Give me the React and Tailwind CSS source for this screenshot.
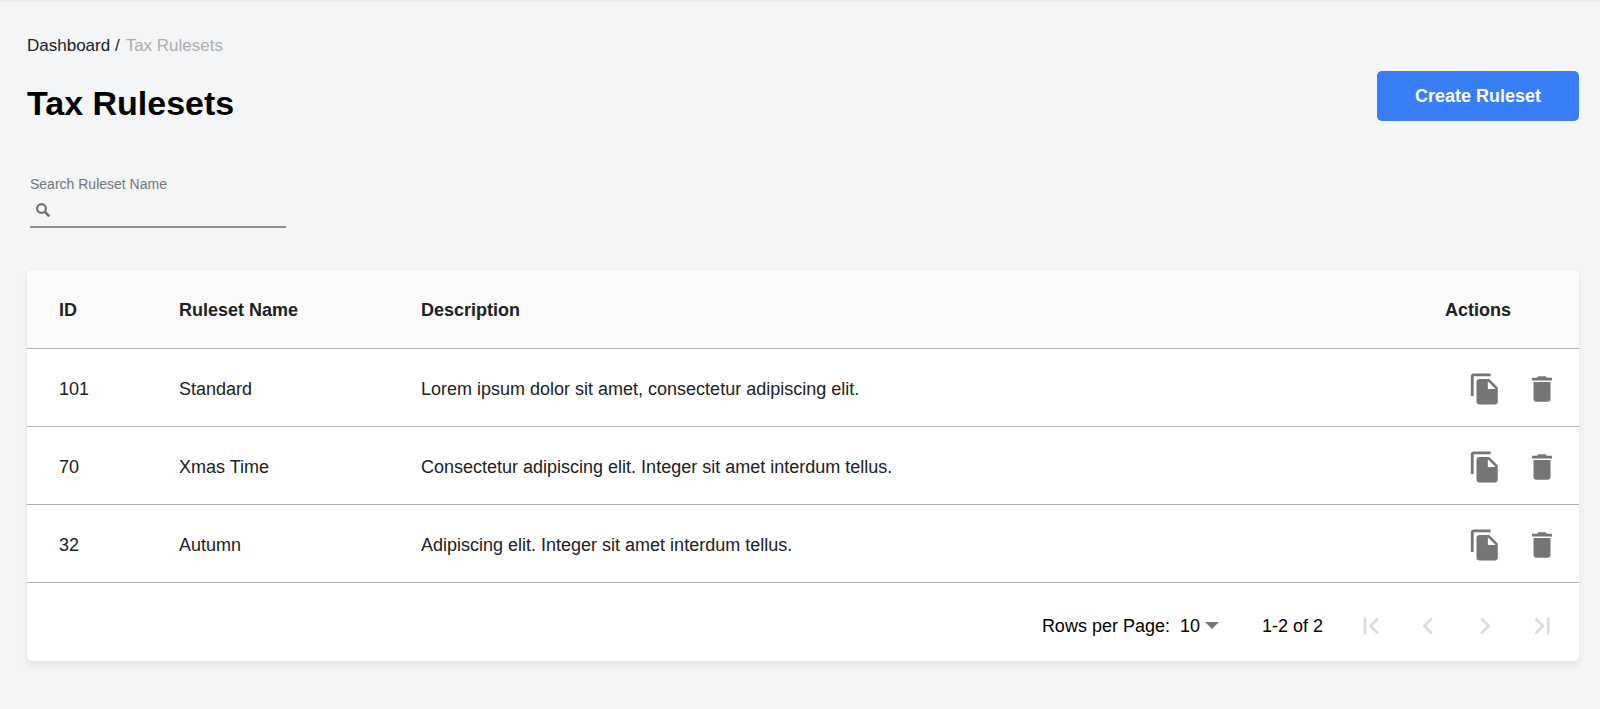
const rulesets = [
  { id: 101, name: "Standard", description: "Lorem ipsum dolor sit amet, consectetur adipiscing elit." },
  { id: 70, name: "Xmas Time", description: "Consectetur adipiscing elit. Integer sit amet interdum tellus." },
  { id: 32, name: "Autumn", description: "Adipiscing elit. Integer sit amet interdum tellus." },
];

function CopyIcon() {
  return (
    <svg className="size-[34px]" viewBox="0 0 24 24" fill="currentColor" aria-hidden="true">
      <path d="M16 1H4c-1.1 0-2 .9-2 2v14h2V3h12V1zm-1 4l6 6v10c0 1.1-.9 2-2 2H7.99C6.89 23 6 22.1 6 21V7c0-1.1.89-2 1.99-2H15zm-1 7h5.5L14 6.5V12z" />
    </svg>
  );
}

function DeleteIcon() {
  return (
    <svg className="size-[34px]" viewBox="0 0 24 24" fill="currentColor" aria-hidden="true">
      <path d="M6 19c0 1.1.9 2 2 2h8c1.1 0 2-.9 2-2V7H6v12zM19 4h-3.5l-1-1h-5l-1 1H5v2h14V4z" />
    </svg>
  );
}

function SearchIcon() {
  return (
    <svg className="size-[14px]" viewBox="0 0 14 14" fill="none" stroke="currentColor" aria-hidden="true">
      <circle cx="5.5" cy="5.5" r="4.4" strokeWidth="2.1" />
      <path d="M8.6 8.6l4.8 4.8" strokeWidth="2.6" />
    </svg>
  );
}

const pagerPaths = {
  "First page": "M17.6 16.59L13.01 12l4.59-4.59L16.19 6l-6 6 6 6zM6.8 6h2v12h-2z",
  "Previous page": "M15.41 7.41L14 6l-6 6 6 6 1.41-1.41L10.83 12z",
  "Next page": "M8.59 16.59L13.17 12 8.59 7.41 10 6l6 6-6 6z",
  "Last page": "M6.7 7.41L11.29 12l-4.59 4.59L8.11 18l6-6-6-6zM15.4 6h2v12h-2z",
};

function Pager() {
  return (
    <nav aria-label="Pagination" className="flex gap-[23px] text-[#dcdcdc]">
      {Object.entries(pagerPaths).map(([label, d]) => (
        <button key={label} type="button" aria-label={label} disabled>
          <svg className="size-[34px]" viewBox="0 0 24 24" fill="currentColor" aria-hidden="true">
            <path d={d} />
          </svg>
        </button>
      ))}
    </nav>
  );
}

export default function App() {
  return (
    <main className="min-h-screen border-t-2 border-[#ebecee] bg-[#f3f5f7] pt-[34px] pr-[21px] pb-12 pl-[27px] font-['Liberation_Sans',Arial,sans-serif] text-lg text-[#202124]">
      <header className="flex items-end justify-between">
        <div>
          <nav aria-label="Breadcrumb" className="flex gap-[6px] text-[17px] leading-5">
            <a href="#dashboard">Dashboard /</a>
            <span className="text-[#adadad]">Tax Rulesets</span>
          </nav>
          <h1 className="mt-[26px] text-[34px] leading-[42px] font-bold text-black">Tax Rulesets</h1>
        </div>
        <button type="button" className="mb-[3px] h-[50px] rounded-[5px] bg-[#377ef7] px-[38px] text-lg font-bold text-white">
          Create Ruleset
        </button>
      </header>

      <form className="mt-[50px] ml-[3px] w-64">
        <label htmlFor="search" className="block text-sm leading-5 text-[#757575]">Search Ruleset Name</label>
        <div className="flex h-[34px] items-center border-b-2 border-[#8e8f91] pl-[6px] text-[#6e6e6e]">
          <SearchIcon />
          <input id="search" type="text" className="min-w-0 flex-1 bg-transparent pl-2 text-base outline-none" />
        </div>
      </form>

      <section className="mt-[42px] overflow-hidden rounded-[5px] bg-white shadow-[0_6px_6px_rgba(0,0,0,0.06),0_0_4px_rgba(0,0,0,0.04)]">
        <table className="w-full table-fixed border-collapse text-left">
          <colgroup>
            <col className="w-[152px]" />
            <col className="w-[242px]" />
            <col />
            <col className="w-[160px]" />
          </colgroup>
          <thead className="bg-[#fbfbfb]">
            <tr className="h-[78px] border-b border-[#b0b0b0]">
              <th className="pt-[3px] pl-8">ID</th>
              <th className="pt-[3px]">Ruleset Name</th>
              <th className="pt-[3px]">Description</th>
              <th className="pt-[3px] pl-[26px]">Actions</th>
            </tr>
          </thead>
          <tbody>
            {rulesets.map((r) => (
              <tr key={r.id} className="h-[78px] border-b border-[#b0b0b0]">
                <td className="pt-[3px] pl-8">{r.id}</td>
                <td className="pt-[3px]">{r.name}</td>
                <td className="pt-[3px]">{r.description}</td>
                <td className="pt-[3px] pr-5">
                  <div className="flex justify-end gap-[23px] text-[#757575]">
                    <button type="button" aria-label={`Copy ${r.name}`}><CopyIcon /></button>
                    <button type="button" aria-label={`Delete ${r.name}`}><DeleteIcon /></button>
                  </div>
                </td>
              </tr>
            ))}
          </tbody>
        </table>
        <footer className="flex h-[78px] items-center justify-end pt-2 pr-5 text-black">
          <label htmlFor="rows">Rows per Page:</label>
          <div className="ml-[10px] flex items-center">
            <select id="rows" className="appearance-none bg-transparent">
              <option>10</option>
            </select>
            <svg className="ml-1 h-[7px] w-[14px]" viewBox="0 0 14 7" fill="#757575" aria-hidden="true">
              <path d="M0 0h14L7 7z" />
            </svg>
          </div>
          <span className="mr-[31px] ml-[43px]">1-2 of 2</span>
          <Pager />
        </footer>
      </section>
    </main>
  );
}
